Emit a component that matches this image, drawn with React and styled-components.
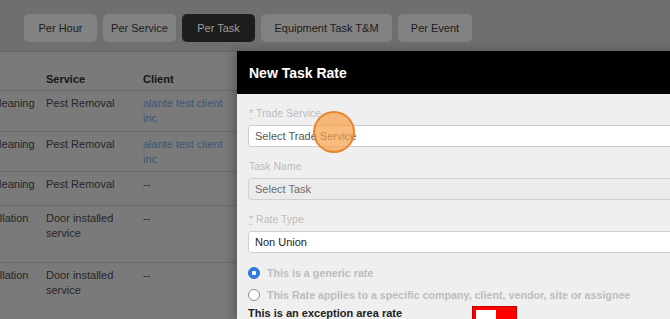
import React from 'react';
import styled, { createGlobalStyle } from 'styled-components';

const GlobalStyle = createGlobalStyle`
  html, body {
    margin: 0;
    padding: 0;
    width: 670px;
    height: 319px;
    overflow: hidden;
    font-family: "Liberation Sans", Arial, sans-serif;
  }
`;

const Page = styled.div`
  position: relative;
  width: 670px;
  height: 319px;
  overflow: hidden;
  background-color: #7a7a7a;
`;

const TopBar = styled.div`
  display: flex;
  align-items: center;
  gap: 6px;
  height: 52px;
  padding: 0 0 0 24px;
  box-sizing: border-box;
  background-color: #6f6f6f;
  border-bottom: 1px solid #686868;
`;

const Tab = styled.button`
  width: ${props => props.width}px;
  height: 28px;
  margin-top: 4px;
  padding: 0;
  border: none;
  border-radius: 5px;
  font-family: inherit;
  font-size: 11px;
  color: ${props => props.active ? '#9c9c9c' : '#1c1c1c'};
  background-color: ${props => props.active ? '#1d1d1d' : '#828282'};
`;

const Table = styled.div`
  margin-left: -51px;
  width: 721px;
`;

const Row = styled.div`
  display: grid;
  grid-template-columns: 97px 97px 110px 120px 120px;
  align-items: ${props => props.header ? 'end' : 'start'};
  height: ${props => props.height}px;
  padding: ${props => props.header ? '0 0 3px' : '5px 0 0'};
  box-sizing: border-box;
  border-bottom: 1px solid #6b6b6b;
  font-size: 11px;
  line-height: 15px;
  font-weight: ${props => props.header ? 'bold' : 'normal'};
  color: ${props => props.header ? '#161616' : '#262626'};
`;

const Cell = styled.div`
  padding-right: ${props => props.link ? '28px' : '8px'};
  color: ${props => props.link ? '#3a5677' : 'inherit'};
`;

const Drawer = styled.div`
  position: absolute;
  left: 237px;
  top: 51px;
  width: 480px;
  height: 268px;
  background-color: #efefef;
  box-shadow: -4px 0 10px rgba(0, 0, 0, 0.25);
`;

const DrawerHeader = styled.div`
  display: flex;
  align-items: center;
  height: 43px;
  padding-left: 12px;
  background-color: #000;
  color: #fff;
  font-size: 14px;
  font-weight: bold;
`;

const DrawerBody = styled.div`
  padding: 13px 0 0 11px;
`;

const Field = styled.div`
  margin-bottom: ${props => props.spacing ?? 13}px;
`;

const Label = styled.div`
  font-size: 10.5px;
  line-height: 13px;
  margin: 0 0 5px 1px;
  color: #bcbcbc;
`;

const Req = styled.span`
  text-decoration: underline dotted;
  margin-right: 3px;
`;

const Input = styled.div`
  display: flex;
  align-items: center;
  height: 22px;
  padding-left: 6px;
  box-sizing: border-box;
  border: 1px solid #d0d0d0;
  border-radius: 3px;
  font-size: 11px;
  background-color: ${props => props.disabled ? '#ebebeb' : '#fff'};
  color: ${props => props.tone || '#222'};
`;

const RadioRow = styled.div`
  display: flex;
  align-items: center;
  gap: 7px;
  height: 22px;
  font-size: 10.7px;
  font-weight: bold;
  color: #bdbdbd;
`;

const RadioDot = styled.span`
  width: 12px;
  height: 12px;
  box-sizing: border-box;
  border-radius: 50%;
  background: ${props => props.checked ? 'radial-gradient(circle, #fff 0 2px, #2f7de1 2.5px)' : '#fff'};
  border: 1px solid ${props => props.checked ? '#2a6fcb' : '#8c8c8c'};
`;

const ExceptionRow = styled.div`
  display: flex;
  align-items: flex-start;
`;

const ExceptionLabel = styled.div`
  width: 224px;
  padding-top: 1px;
  font-size: 11px;
  line-height: 13px;
  font-weight: bold;
  color: #222;
`;

const Toggle = styled.div`
  width: 45px;
  height: 24px;
  padding: 3px;
  box-sizing: border-box;
  background-color: #f00;
  border: 1px solid #c40000;
`;

const Knob = styled.div`
  width: 20px;
  height: 20px;
  background-color: #fff;
`;

const ClickMarker = styled.div`
  position: absolute;
  left: 313px;
  top: 111px;
  width: 42px;
  height: 42px;
  box-sizing: border-box;
  border-radius: 50%;
  background-color: rgba(246, 160, 70, 0.7);
  border: 2px solid rgba(228, 130, 40, 0.9);
`;

const tabs = [
  { label: 'Per Hour', width: 73 },
  { label: 'Per Service', width: 73 },
  { label: 'Per Task', width: 73, active: true },
  { label: 'Equipment Task T&M', width: 131 },
  { label: 'Per Event', width: 74 },
];

const rows = [
  { trade: 'Window Cleaning', service: 'Pest Removal', client: 'alante test client inc', link: true, height: 41 },
  { trade: 'Window Cleaning', service: 'Pest Removal', client: 'alante test client inc', link: true, height: 40 },
  { trade: 'Window Cleaning', service: 'Pest Removal', client: '--', height: 34 },
  { trade: 'Door Installation', service: 'Door installed service', client: '--', height: 57 },
  { trade: 'Door Installation', service: 'Door installed service', client: '--', height: 57 },
];

const App = () => {
  return (
    <Page>
      <GlobalStyle />
      <TopBar>
        {tabs.map(t => (
          <Tab key={t.label} width={t.width} active={t.active}>{t.label}</Tab>
        ))}
      </TopBar>
      <Table>
        <Row header height={39}>
          <Cell>Trade</Cell>
          <Cell>Service</Cell>
          <Cell>Client</Cell>
          <Cell>Task</Cell>
          <Cell>Rate</Cell>
        </Row>
        {rows.map((r, i) => (
          <Row key={i} height={r.height}>
            <Cell>{r.trade}</Cell>
            <Cell>{r.service}</Cell>
            <Cell link={r.link}>{r.client}</Cell>
            <Cell>Task</Cell>
            <Cell>$0.00</Cell>
          </Row>
        ))}
      </Table>
      <Drawer>
        <DrawerHeader>New Task Rate</DrawerHeader>
        <DrawerBody>
          <Field>
            <Label><Req>*</Req>Trade Service</Label>
            <Input tone="#555">Select Trade Service</Input>
          </Field>
          <Field>
            <Label>Task Name</Label>
            <Input disabled tone="#6e6e6e">Select Task</Input>
          </Field>
          <Field spacing={9}>
            <Label><Req>*</Req>Rate Type</Label>
            <Input>Non Union</Input>
          </Field>
          <RadioRow><RadioDot checked />This is a generic rate</RadioRow>
          <RadioRow><RadioDot />This Rate applies to a specific company, client, vendor, site or assignee</RadioRow>
          <ExceptionRow>
            <ExceptionLabel>This is an exception area rate</ExceptionLabel>
            <Toggle><Knob /></Toggle>
          </ExceptionRow>
        </DrawerBody>
      </Drawer>
      <ClickMarker />
    </Page>
  );
};

export default App;
